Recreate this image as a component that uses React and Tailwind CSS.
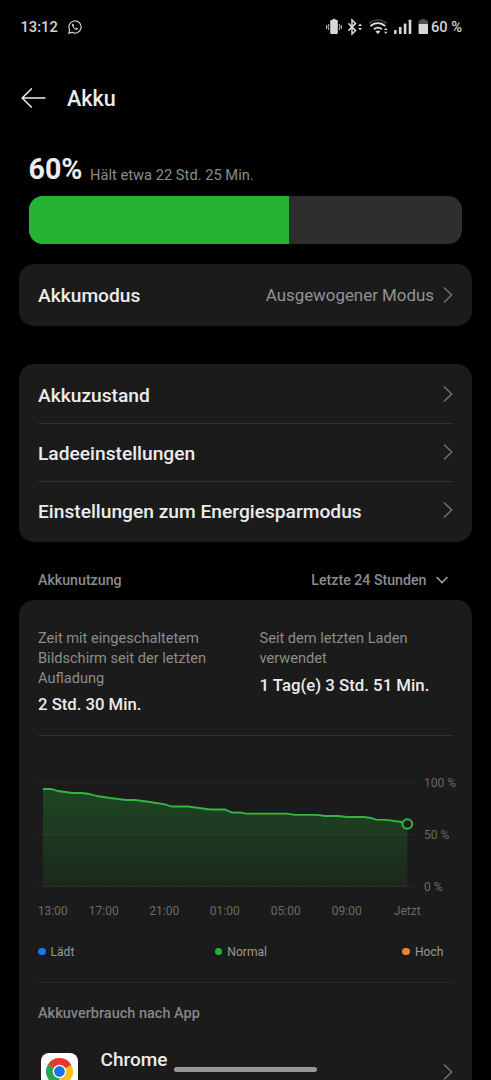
import React from "react";

const rows = ["Akkuzustand", "Ladeeinstellungen", "Einstellungen zum Energiesparmodus"];

const level = [
  [5, 11], [13, 11], [20, 13], [34, 15], [44, 15], [51, 16], [59, 18], [72, 20], [88, 22],
  [97, 22], [112, 24], [127, 26.3], [134, 28.5], [150, 28.5], [172, 31.5], [187, 31.5],
  [194, 34.5], [203, 34.7], [208, 35.6], [249, 35.7], [257, 36.8], [279, 36.8], [287, 38],
  [300, 38], [309, 39], [326, 39], [333, 40], [338, 41.7], [348, 41.9], [364, 44],
];
const line = level.map((p) => p.join(",")).join(" L");

const hours = [
  ["13:00", "ml-[-0.5px]"],
  ["17:00", "ml-[20.5px]"],
  ["21:00", "ml-[30px]"],
  ["01:00", "ml-[30px]"],
  ["05:00", "ml-[30.5px]"],
  ["09:00", "ml-[30.5px]"],
  ["Jetzt", "ml-[30px]"],
];

function Chevron() {
  return (
    <svg className="h-[18px] w-[11px] shrink-0" viewBox="0 0 11 18" fill="none" stroke="#747474" strokeWidth="1.4">
      <path d="M1.9 1.5 9.7 9 1.9 16.5" />
    </svg>
  );
}

function StatusIcons() {
  return (
    <svg className="h-5 w-[104px]" viewBox="0 0 104 20" fill="#d8d8d8">
      <rect x="4.2" y="3" width="7.6" height="14" rx="1.2" />
      <rect x="6.5" y="1.9" width="3" height="2" />
      <path d="M2.7 7v2l-1 1 1 1v2M.6 8v4M13.3 7v2l1 1-1 1v2M15.4 8v4" fill="none" stroke="#d8d8d8" strokeWidth=".9" />
      <path d="m22.4 6.4 7.2 7.2-3.6 3.4V3l3.6 3.4-7.2 7.2" fill="none" stroke="#d8d8d8" strokeWidth="1.5" />
      <path d="m32.2 8.9 1.9-2.4L36 8.9zM32.2 11.1l1.9 2.4 1.9-2.4z" />
      <path d="M43.2 6.3a12.8 12.8 0 0 1 17.2 0" fill="none" stroke="#454545" strokeWidth="1.7" />
      <path d="M44.4 9.2a10.4 10.4 0 0 1 14.8 0M48 12.2a5.8 5.8 0 0 1 7.8 0" fill="none" stroke="#e2e2e2" strokeWidth="1.9" />
      <path d="M49.5 14.5q2.4-1.8 4.8 0l-2.4 2.6z" />
      <path d="m58 13 1.8-2.2 1.8 2.2zM58 14.8l1.8 2.2 1.8-2.2z" />
      <rect x="68" y="13" width="2.6" height="4" rx=".4" />
      <rect x="72.9" y="10" width="2.6" height="7" rx=".4" />
      <rect x="77.8" y="6.6" width="2.6" height="10.4" rx=".4" />
      <rect x="82.7" y="2.8" width="2.6" height="14.2" rx=".4" />
      <path d="M95.2 2h4.2v1.2h1.4q1.2 0 1.2 1.2V8h-9.4V4.4q0-1.2 1.2-1.2h1.4z" fill="#505050" />
      <path d="M92.6 7h9.4v8.9q0 1.2-1.2 1.2h-7q-1.2 0-1.2-1.2z" />
    </svg>
  );
}

function Chrome() {
  return (
    <svg className="size-[27px]" viewBox="0 0 48 48">
      <path d="M24 24 3.2 12A24 24 0 0 1 44.8 12z" fill="#e33b2e" />
      <path d="M24 24 44.8 12A24 24 0 0 1 24 48z" fill="#fbc116" />
      <path d="M24 24V48A24 24 0 0 1 3.2 12z" fill="#2da44e" />
      <path d="M24 12h20.8L34.4 18z" fill="#e33b2e" />
      <path d="M34.4 18 34.4 30 24 48 24 36z" fill="#fbc116" />
      <path d="M13.6 30 3.2 12 13.6 18 24 36z" fill="#2da44e" />
      <circle cx="24" cy="24" r="12" fill="#fff" />
      <circle cx="24" cy="24" r="9.6" fill="#1a73e8" />
    </svg>
  );
}

function Legend({ dot, label }) {
  return (
    <div className="flex items-center gap-[5px]">
      <span className={`size-[7.5px] rounded-full ${dot}`} />
      <span>{label}</span>
    </div>
  );
}

export default function App() {
  return (
    <div className="relative flex h-[1080px] w-[491px] flex-col overflow-hidden bg-black font-['Roboto',sans-serif] text-[#ececec]">
      <div className="flex h-[54px] shrink-0 items-center pl-[20.5px] pr-[29px] text-[14.7px] font-medium text-[#d4d4d4]">
        <span>13:12</span>
        <svg className="ml-[10px] size-[14px]" viewBox="0 0 14 14" fill="none" stroke="#cfcfcf" strokeWidth="1.2">
          <path d="M.9 13.1 1.7 10A6.1 6.1 0 1 1 4 12.3z" />
          <path d="M4.4 3.7q-1.1 1 .1 3 1.6 2.7 4 3.2 1.4 0 1.6-1.3L8.5 7.8l-.8.8Q6 7.8 5.4 6.3l.7-.8-.7-1.8z" fill="#cfcfcf" stroke="none" />
        </svg>
        <div className="ml-auto flex items-center gap-px">
          <StatusIcons />
          <span className="w-[31px] whitespace-nowrap">60 %</span>
        </div>
      </div>

      <header className="flex h-[88px] shrink-0 items-center pl-[21px]">
        <svg className="h-5 w-[25px]" viewBox="0 0 25 20" fill="none" stroke="#ececec" strokeWidth="1.5">
          <path d="M24.5 10H1.2M10.8.5 1.2 10l9.6 9.5" />
        </svg>
        <h1 className="ml-[21px] pt-[2px] text-[21.5px] font-medium leading-7">Akku</h1>
      </header>

      <div className="mt-[10px] flex h-[44px] shrink-0 items-start gap-[7.5px] pl-[28.5px]">
        <span className="text-[28.6px] font-bold leading-[34px]">60%</span>
        <span className="pt-[13px] text-[14.7px] leading-5 text-[#8c8c8c]">Hält etwa 22 Std. 25 Min.</span>
      </div>
      <div className="ml-[28.5px] h-12 w-[433.5px] shrink-0 overflow-hidden rounded-[14px] bg-[#2e2e2e]">
        <div className="h-full w-3/5 bg-[#25b335]" />
      </div>

      <section className="mx-[19px] mt-[19.5px] flex h-[62px] shrink-0 items-center rounded-[15px] bg-[#1b1b1b] px-[19px]">
        <span className="pt-[3px] text-[19.2px] font-medium">Akkumodus</span>
        <span className="ml-auto mr-[8px] pt-[3px] text-[16.9px] text-[#929292]">Ausgewogener Modus</span>
        <Chevron />
      </section>

      <section className="mx-[19px] mt-[38px] h-[178px] shrink-0 rounded-[15px] bg-[#1b1b1b] px-[19px] pt-[3px]">
        {rows.map((row, i) => (
          <div key={row} className={`flex h-[57.7px] items-center justify-between ${i < 2 ? "border-b border-[#303030]" : ""}`}>
            <span className="pt-[3px] text-[19.2px] font-medium">{row}</span>
            <div className="pb-px"><Chevron /></div>
          </div>
        ))}
      </section>

      <div className="flex h-[58px] shrink-0 items-center justify-between pl-[38px] pr-[43px] pt-[20px] text-[14.2px] font-medium text-[#8c8c8c]">
        <span>Akkunutzung</span>
        <div className="flex items-center gap-[9.5px]">
          <span>Letzte 24 Stunden</span>
          <svg className="h-2 w-3" viewBox="0 0 12 8" fill="none" stroke="#a0a0a0" strokeWidth="1.6">
            <path d="m.6 1 5.4 5.5L11.4 1" />
          </svg>
        </div>
      </div>

      <section className="mx-[19px] h-[500px] shrink-0 rounded-t-[15px] bg-[#1b1b1b] px-[19px] pt-[28px]">
        <div className="flex h-[108px] border-b border-[#303030]">
          <div className="w-[221.5px]">
            <p className="w-[180px] text-[14.6px] leading-5 text-[#8c8c8c]">Zeit mit eingeschaltetem Bildschirm seit der letzten Aufladung</p>
            <p className="mt-[5px] text-[16.7px] font-medium leading-6">2 Std. 30 Min.</p>
          </div>
          <div>
            <p className="w-[160px] text-[14.6px] leading-5 text-[#8c8c8c]">Seit dem letzten Laden verwendet</p>
            <p className="mt-[5px] whitespace-nowrap text-[16.8px] font-medium leading-6">1 Tag(e) 3 Std. 51 Min.</p>
          </div>
        </div>

        <div className="mt-[42px] flex h-[118px] gap-[10px] text-[12px] text-[#6a6a6a]">
          <svg className="h-[118px] w-[376px] shrink-0" viewBox="0 0 376 118" fill="none">
            <defs>
              <linearGradient id="charge" x1="0" y1="0" x2="0" y2="1">
                <stop offset="0" stopColor="#24b335" stopOpacity=".29" />
                <stop offset="1" stopColor="#24b335" stopOpacity=".08" />
              </linearGradient>
            </defs>
            <path d="M0 4.5H376M0 56.5H376M0 108.5H376" stroke="#292929" strokeDasharray="2 1" />
            <path d={`M${line} L369.3,46 V109 H5 Z`} fill="url(#charge)" />
            <path d={`M${line}`} stroke="#35b442" strokeWidth="1.8" />
            <circle cx="369.3" cy="46" r="4.8" fill="#1b1b1b" stroke="#35b442" strokeWidth="2" />
          </svg>
          <div className="-mt-[2px] flex h-[118px] flex-col justify-between whitespace-nowrap leading-[14px]">
            <span>100 %</span>
            <span>50 %</span>
            <span>0 %</span>
          </div>
        </div>
        <div className="mt-[8px] flex text-[12px] leading-[14px] text-[#6a6a6a]">
          {hours.map(([label, gap]) => (
            <span key={label} className={`w-[30.5px] shrink-0 whitespace-nowrap text-center ${gap}`}>{label}</span>
          ))}
        </div>
        <div className="mt-[27px] flex h-[38px] justify-between border-b border-[#292929] pr-[9.5px] text-[12.1px] leading-[14px] text-[#999999]">
          <div className="h-[14px]"><Legend dot="bg-[#1677f2]" label="Lädt" /></div>
          <div className="ml-[5px] h-[14px]"><Legend dot="bg-[#25b13c]" label="Normal" /></div>
          <div className="h-[14px]"><Legend dot="bg-[#ee832e]" label="Hoch" /></div>
        </div>
        <h2 className="mt-[21px] text-[14.5px] font-medium leading-5 text-[#858585]">Akkuverbrauch nach App</h2>
        <div className="mt-[29.5px] flex">
          <div className="ml-[3px] flex h-9 w-[36.5px] items-center justify-center rounded-[8px] bg-white">
            <Chrome />
          </div>
          <span className="ml-[23px] -mt-[5px] text-[19px] font-medium leading-6">Chrome</span>
          <div className="ml-auto mt-[9.5px]"><Chevron /></div>
        </div>
      </section>

      <div className="absolute left-[174px] top-[1067px] h-[5px] w-[143px] rounded-full bg-[#969696]" />
    </div>
  );
}
